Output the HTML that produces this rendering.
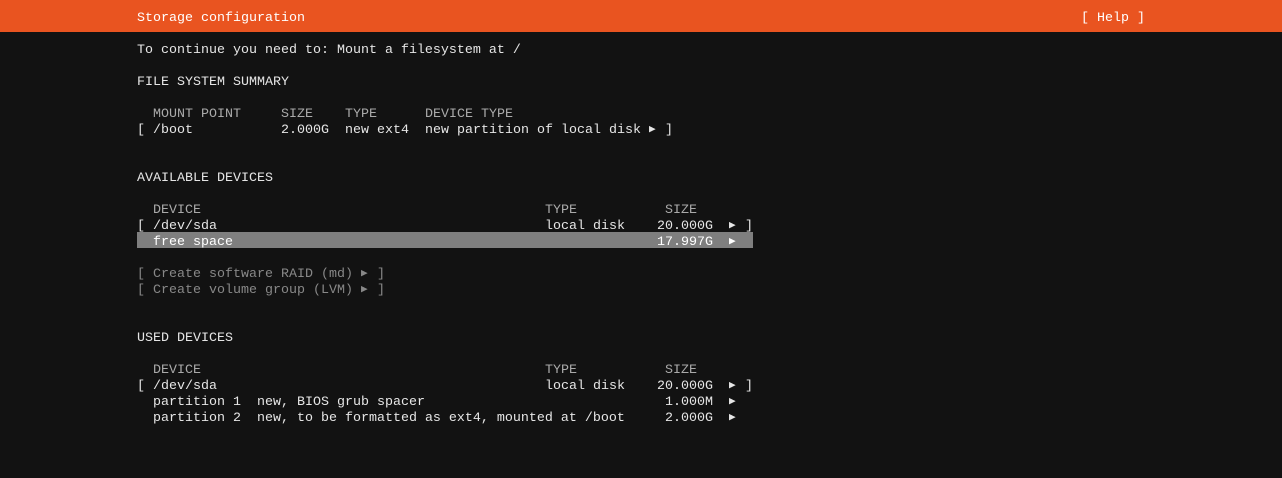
<!DOCTYPE html>
<html><head><meta charset="utf-8"><style>
html,body{margin:0;padding:0;}
body{width:1282px;height:478px;background:#121212;position:relative;overflow:hidden;font-family:"Liberation Mono","DejaVu Sans Mono",monospace;font-size:13.33px;color:#e6e6e6;}
.bar{position:absolute;left:0;top:0;width:1282px;height:32px;background:#e95420;}
.t{position:absolute;height:16px;line-height:16px;white-space:pre;}
.hl{position:absolute;left:137px;top:232px;width:616px;height:16px;background:#7f7f7f;}
.tri{font-size:11px;}
</style></head><body>
<div class="bar"></div>
<div class="hl"></div>
<script>
const X=137,Y=11;
const items=[
[0,0,"Storage configuration","#fff"],
[0,118,"[ Help ]","#fff"],
[2,0,"To continue you need to: Mount a filesystem at /"],
[4,0,"FILE SYSTEM SUMMARY"],
[6,2,"MOUNT POINT","#aaa"],[6,18,"SIZE","#aaa"],[6,26,"TYPE","#aaa"],[6,36,"DEVICE TYPE","#aaa"],
[7,0,"[ /boot"],[7,18,"2.000G"],[7,26,"new ext4"],[7,36,"new partition of local disk"],[7,64,"▶",null,1],[7,66,"]"],
[10,0,"AVAILABLE DEVICES"],
[12,2,"DEVICE","#aaa"],[12,51,"TYPE","#aaa"],[12,66,"SIZE","#aaa"],
[13,0,"[ /dev/sda"],[13,51,"local disk"],[13,65,"20.000G"],[13,74,"▶",null,1],[13,76,"]"],
[14,2,"free space","#fff"],[14,65,"17.997G","#fff"],[14,74,"▶","#fff",1],
[16,0,"[ Create software RAID (md)","#888"],[16,28,"▶","#888",1],[16,30,"]","#888"],
[17,0,"[ Create volume group (LVM)","#888"],[17,28,"▶","#888",1],[17,30,"]","#888"],
[20,0,"USED DEVICES"],
[22,2,"DEVICE","#aaa"],[22,51,"TYPE","#aaa"],[22,66,"SIZE","#aaa"],
[23,0,"[ /dev/sda"],[23,51,"local disk"],[23,65,"20.000G"],[23,74,"▶",null,1],[23,76,"]"],
[24,2,"partition 1  new, BIOS grub spacer"],[24,66,"1.000M"],[24,74,"▶",null,1],
[25,2,"partition 2  new, to be formatted as ext4, mounted at /boot"],[25,66,"2.000G"],[25,74,"▶",null,1]
];
for(const [r,c,s,col,tri] of items){
 const d=document.createElement('div');d.className='t'+(tri?' tri':'');
 d.textContent=s;d.style.left=(X+c*8+(tri?0:0))+'px';d.style.top=(Y+r*16-(tri?1:0))+'px';
 if(col)d.style.color=col;document.body.appendChild(d);
}
</script>
</body></html>
